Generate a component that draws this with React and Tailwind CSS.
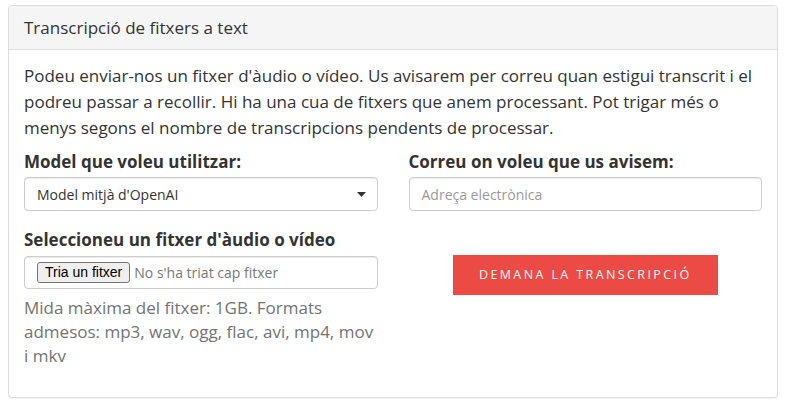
const App = () => {
    return (
        <div className="min-h-screen bg-white pt-[5px] px-2 text-[#333]" style={{ fontFamily: '"Open Sans", sans-serif' }}>
            <div className="w-[770px] border border-[#ddd] rounded-[4px] shadow-[0_1px_1px_rgba(0,0,0,0.05)] bg-white">
                <div className="bg-[#f5f5f5] border-b border-[#ddd] rounded-t-[3px] px-[15px] h-[44px] flex items-center text-[17px]">
                    Transcripció de fitxers a text
                </div>

                <div className="px-[15px] pt-[13px] pb-[29px]">
                    <p className="text-[17px] leading-[26px]">
                        Podeu enviar-nos un fitxer d'àudio o vídeo. Us avisarem per correu quan estigui transcrit i el podreu passar a recollir. Hi ha una cua de fitxers que anem processant. Pot trigar més o menys segons el nombre de transcripcions pendents de processar.
                    </p>

                    <div className="grid grid-cols-2 gap-x-[31px] mt-[8px]">
                        <div>
                            <label className="block font-bold text-[17px] leading-[26px] mb-[2px]">Model que voleu utilitzar:</label>
                            <div className="h-[34px] border border-[#ccc] rounded-[4px] flex items-center justify-between pl-[12px] pr-[11px] text-[14px] text-[#333] shadow-[inset_0_1px_1px_rgba(0,0,0,0.075)]">
                                <span>Model mitjà d'OpenAI</span>
                                <svg width="9" height="5" viewBox="0 0 9 5"><path d="M0 0h9L4.5 5z" fill="#333" /></svg>
                            </div>
                        </div>
                        <div>
                            <label className="block font-bold text-[17px] leading-[26px] mb-[2px]">Correu on voleu que us avisem:</label>
                            <div className="h-[34px] border border-[#ccc] rounded-[4px] flex items-center px-[12px] text-[14px] text-[#999] shadow-[inset_0_1px_1px_rgba(0,0,0,0.075)]">
                                Adreça electrònica
                            </div>
                        </div>

                        <div className="mt-[16px]">
                            <label className="block font-bold text-[17px] leading-[26px] mb-[3px]">Seleccioneu un fitxer d'àudio o vídeo</label>
                            <div className="h-[33px] border border-[#ccc] rounded-[4px] flex items-center pl-[12px] gap-[4px] text-[14px] shadow-[inset_0_1px_1px_rgba(0,0,0,0.075)]" style={{ fontFamily: '"Liberation Sans", Arial, sans-serif' }}>
                                <span className="h-[21px] px-[7px] flex items-center border border-[#767676] rounded-[3px] bg-[#efefef] text-[14px] text-black">Tria un fitxer</span>
                                <span className="text-[#777] text-[14px]" style={{ fontFamily: '"Open Sans", sans-serif' }}>No s'ha triat cap fitxer</span>
                            </div>
                            <p className="text-[#737373] text-[17px] leading-[24px] mt-[7px]">
                                Mida màxima del fitxer: 1GB. Formats admesos: mp3, wav, ogg, flac, avi, mp4, mov i mkv
                            </p>
                        </div>
                        <div className="mt-[16px] flex justify-center">
                            <button className="mt-[28px] w-[265px] h-[40px] bg-[#ec4a44] text-white text-[12.5px] tracking-[2.4px] uppercase">
                                Demana la transcripció
                            </button>
                        </div>
                    </div>
                </div>
            </div>
        </div>
    );
};

export default App;
